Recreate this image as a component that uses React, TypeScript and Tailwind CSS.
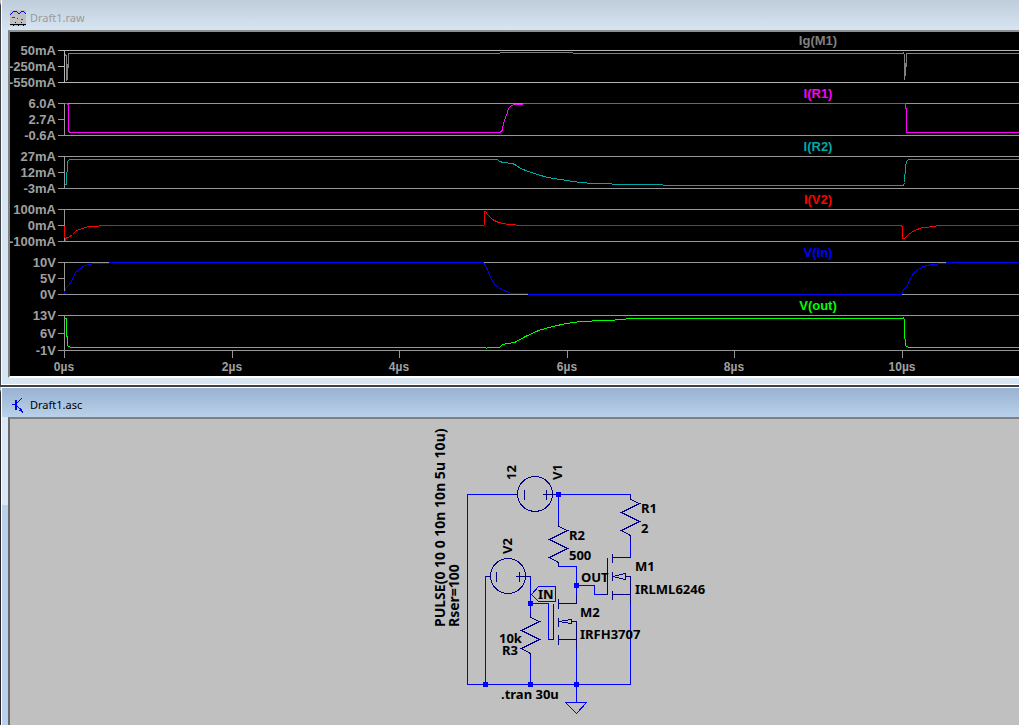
const GREY = '#969696';

type Pane = {
  name: string;
  color: string;
  axis: string;
  y: [number, number, number];
  ticks: [string, string, string];
  trace: string;
};

const panes: Pane[] = [
  {
    name: 'Ig(M1)', color: '#808080', axis: '#b4b4b4', y: [50, 66, 82],
    ticks: ['50mA', '-250mA', '-550mA'],
    trace: '64,54 65,54 66,56 66,80 67,78 67,64 68,67 68,53 499,53 500,52 572,52 573,53 902,53 903,52 904,55 904,79 905,73 905,63 906,66 906,53 4000,53',
  },
  {
    name: 'I(R1)', color: '#ff00ff', axis: GREY, y: [103, 119, 135],
    ticks: ['6.0A', '2.7A', '-0.6A'],
    trace: '64,103 67,103 68,105 68,131 70,132 499,132 501,131 502,129 503,123 505,117 507,112 508,108 510,106 513,104 522,104 523,103 905,103 905,107 906,109 906,132 4000,132',
  },
  {
    name: 'I(R2)', color: '#00a8a8', axis: GREY, y: [156, 172, 188],
    ticks: ['27mA', '12mA', '-3mA'],
    trace: '64,184 66,184 66,172 67,171 67,161 69,159 497,159 499,161 503,162 512,163 516,165 520,168 528,171 537,174 547,177 560,179 572,181 580,182 592,183 611,183 612,184 662,184 663,185 903,185 904,182 905,166 906,161 908,159 4000,159',
  },
  {
    name: 'I(V2)', color: '#ff0000', axis: GREY, y: [209, 225, 241],
    ticks: ['100mA', '0mA', '-100mA'],
    trace: '64,225 64,236 65,239 66,237 68,237 72,234 76,230 82,228 88,226 98,226 99,225 483,225 484,224 484,211 485,211 487,214 492,219 498,222 503,223 508,224 515,224 516,225 901,225 902,227 902,238 904,238 908,234 914,230 922,227 935,226 936,225 4000,225',
  },
  {
    name: 'V(in)', color: '#0000ff', axis: GREY, y: [262, 278, 294],
    ticks: ['10V', '5V', '0V'],
    trace: '64,294 65,288 69,284 72,279 75,272 79,269 84,265 94,263 108,263 109,262 483,262 487,269 490,277 495,285 501,289 511,293 527,293 528,294 901,294 903,289 907,285 910,277 916,270 923,266 931,264 945,263 946,262 4000,262',
  },
  {
    name: 'V(out)', color: '#00ff00', axis: GREY, y: [315, 333, 350],
    ticks: ['13V', '6V', '-1V'],
    trace: '64,318 66,318 66,335 67,337 67,345 70,347 485,347 486,348 487,347 499,347 502,344 514,342 525,336 538,330 552,326 566,323 580,321 604,320 625,319 626,318 902,318 903,317 904,320 904,338 905,339 905,345 908,347 4000,347',
  },
];

const times = [
  { x: 64, label: '0µs' },
  { x: 232, label: '2µs' },
  { x: 399, label: '4µs' },
  { x: 567, label: '6µs' },
  { x: 734, label: '8µs' },
  { x: 902, label: '10µs' },
];

function Waveforms() {
  return (
    <svg
      className="block h-[344px] w-full bg-black font-['Liberation_Sans',Arial,sans-serif] text-[13px] font-bold"
      role="img"
      aria-label="Transient waveforms"
    >
      <g transform="translate(-9.5 -31.5)" fill="none" strokeWidth="1" shapeRendering="crispEdges">
        {panes.map((p) => (
          <g key={p.name}>
            <path
              stroke={p.axis}
              d={`M57 ${p.y[0]}H4000M57 ${p.y[1]}H64M57 ${p.y[2]}H4000M64 ${p.y[0]}V${p.y[2]}`}
            />
            <polyline stroke={p.color} points={p.trace} />
          </g>
        ))}
        {times.map((t) => (
          <path key={t.x} stroke={GREY} d={`M${t.x} 350V357`} />
        ))}
      </g>
      <g transform="translate(-10 -32)">
        {panes.map((p) => (
          <g key={p.name}>
            <text x="818" y={p.y[0] - 5} textAnchor="middle" fill={p.color}>
              {p.name}
            </text>
            {p.ticks.map((t, i) => (
              <text key={t} x="56" y={p.y[i] + 5} textAnchor="end" fill="#a0a0a0">
                {t}
              </text>
            ))}
          </g>
        ))}
        {times.map((t) => (
          <text key={t.x} x={t.x} y="371" textAnchor="middle" fill="#a0a0a0" className="text-[12px]">
            {t.label}
          </text>
        ))}
      </g>
    </svg>
  );
}

const junctions: [number, number][] = [
  [558, 494], [576, 585], [530, 603], [485, 684], [530, 684], [576, 684],
];

const labels: { x: number; y: number; text: string; up?: boolean; large?: boolean }[] = [
  { x: 445, y: 627, text: 'PULSE(0 10 0 10n 10n 5u 10u)', up: true, large: true },
  { x: 459, y: 627, text: 'Rser=100', up: true, large: true },
  { x: 516, y: 480, text: '12', up: true },
  { x: 562, y: 480, text: 'V1', up: true },
  { x: 512, y: 554, text: 'V2', up: true },
  { x: 641, y: 513, text: 'R1' },
  { x: 641, y: 533, text: '2' },
  { x: 569, y: 540, text: 'R2' },
  { x: 569, y: 560, text: '500' },
  { x: 635, y: 571, text: 'M1' },
  { x: 635, y: 594, text: 'IRLML6246' },
  { x: 581, y: 582, text: 'OUT' },
  { x: 538, y: 599, text: 'IN' },
  { x: 580, y: 617, text: 'M2' },
  { x: 580, y: 639, text: 'IRFH3707' },
  { x: 499, y: 643, text: '10k' },
  { x: 502, y: 655, text: 'R3' },
  { x: 501, y: 699, text: '.tran 30u' },
];

function Schematic() {
  return (
    <svg
      className="block h-[306px] w-full bg-[#c0c0c0] font-['Noto_Sans','Open_Sans',sans-serif] text-[13px] font-bold"
      role="img"
      aria-label="Circuit schematic"
    >
      <g transform="translate(-9.5 -418.5)" fill="none" strokeWidth="1" shapeRendering="crispEdges">
        <g stroke="#0000ff">
          <path d="M512 494H467V684H630V594" />
          <path d="M558 494H630V499M558 494V526M630 535V557" />
          <path d="M558 562V566H576V603M576 585H594V594H601" />
          <path d="M490 576H485V684M526 576H530V617M530 603H548V639H549" />
          <path d="M530 653V684M576 639V702" />
          <path d="M531 594L538 586H555V601H538Z" />
          <path d="M565 702H586L576 713Z" />
        </g>
        <g stroke="#000080">
          <circle cx="534.5" cy="493.5" r="17.5" />
          <path d="M512 494H517M524 489V499M542 494H558M546 489V499" />
          <circle cx="507.5" cy="575.5" r="17.5" />
          <path d="M485 576H490M496 571V581M515 576H530M519 571V581" />
          <path d="M558 521V526L567 530L549 539L567 548L549 557L558 562V566" />
          <path d="M630 494V499L639 503L621 512L639 521L621 530L630 535V540" />
          <path d="M530 612V617L539 621L521 630L539 639L521 648L530 653V657" />
          <path d="M607 557V594H600M612 553V562M612 571V580M612 590V599M612 557H630M612 594H630M630 576V603M612 576L625 573V579L612 576M625 576H630" />
          <path d="M553 603V639H548M558 598V608M558 617V626M558 634V644M558 603H576V594M558 639H576M576 621V648M558 621L571 619V623L558 621M571 621H576" />
        </g>
      </g>
      <g transform="translate(-10 -419)" fill="#0000ff" shapeRendering="crispEdges">
        {junctions.map(([x, y]) => (
          <rect key={`${x}-${y}`} x={x - 2} y={y - 2} width="5" height="5" />
        ))}
      </g>
      <g transform="translate(-10 -419)" fill="#000000">
        {labels.map((l) => (
          <text
            key={l.text}
            className={l.large ? 'text-[14px]' : 'text-[13px]'}
            transform={l.up ? `translate(${l.x} ${l.y}) rotate(-90)` : `translate(${l.x} ${l.y})`}
          >
            {l.text}
          </text>
        ))}
      </g>
    </svg>
  );
}

function WaveIcon() {
  return (
    <svg className="block h-4 w-4" viewBox="0 0 16 16" shapeRendering="crispEdges" aria-hidden="true">
      <rect width="16" height="16" fill="#c0c0c0" />
      <path
        fill="#0000ff"
        d="M0 4h1v1H0zM1 3h1v1H1zM2 2h1v1H2zM3 1h4v1H3zM7 2h1v1H7zM8 3h2v1H8zM10 2h1v1h-1zM11 1h3v1h-3zM14 2h1v1h-1zM15 3h1v1h-1z"
      />
      <path fill="#e00000" d="M2 7h3v1H2zM7 8h1v1H7zM11 9h2v1h-2z" />
      <path fill="#0000a0" d="M5 12h1v1H5zM11 12h1v1h-1z" />
      <path fill="#000000" d="M0 14h16v1H0zM3 15h1v1H3zM8 15h1v1H8zM13 15h1v1h-1z" />
    </svg>
  );
}

function TransistorIcon() {
  return (
    <svg className="block h-4 w-4" viewBox="0 0 16 16" shapeRendering="crispEdges" aria-hidden="true">
      <path
        fill="#0000ff"
        d="M2 7h4v1H2zM5 3h2v10H5zM7 5h1v1H7zM8 4h1v1H8zM9 3h1v1H9zM10 2h1v1H10zM11 1h1v1H11zM7 9h1v1H7zM8 10h1v1H8zM9 11h2v1H9zM10 12h1v1H10zM9 13h3v1H9zM11 12h1v3H11zM12 14h1v2H12z"
      />
    </svg>
  );
}

export default function App() {
  return (
    <main className="min-h-screen overflow-hidden bg-[#c0c0c0] font-['Noto_Sans','Open_Sans',sans-serif] text-[11px] leading-4">
      <section className="rounded-tl-md border-b-2 border-l border-[#3f3f46] bg-[#d7e4f2]">
        <div className="border-b border-l border-white">
          <header className="flex h-[30px] items-start gap-1 bg-linear-to-b from-[#bfcddb] to-[#d7e4f2] pt-[10px] pl-2">
            <WaveIcon />
            <h1 className="text-[#9a9a9a]">Draft1.raw</h1>
          </header>
          <div className="pb-[6px] pl-[6px]">
            <div className="border-t-2 border-b-2 border-l-2 border-t-[#909090] border-b-white border-l-[#808080]">
              <Waveforms />
            </div>
          </div>
        </div>
      </section>
      <section className="rounded-tl-md border-l border-[#26262b] bg-linear-to-b from-[#dbe7f5] from-35% to-[#b9d1ea] to-35%">
        <div className="border-t border-l border-white">
          <header className="flex h-[29px] items-center gap-1 bg-linear-to-b from-[#99b2d1] to-[#b9d1ea] pt-1 pl-2">
            <TransistorIcon />
            <h2 className="text-black">Draft1.asc</h2>
          </header>
          <div className="pl-[6px]">
            <div className="border-t-2 border-l-2 border-t-[#808080] border-l-[#696969]">
              <Schematic />
            </div>
          </div>
        </div>
      </section>
    </main>
  );
}
